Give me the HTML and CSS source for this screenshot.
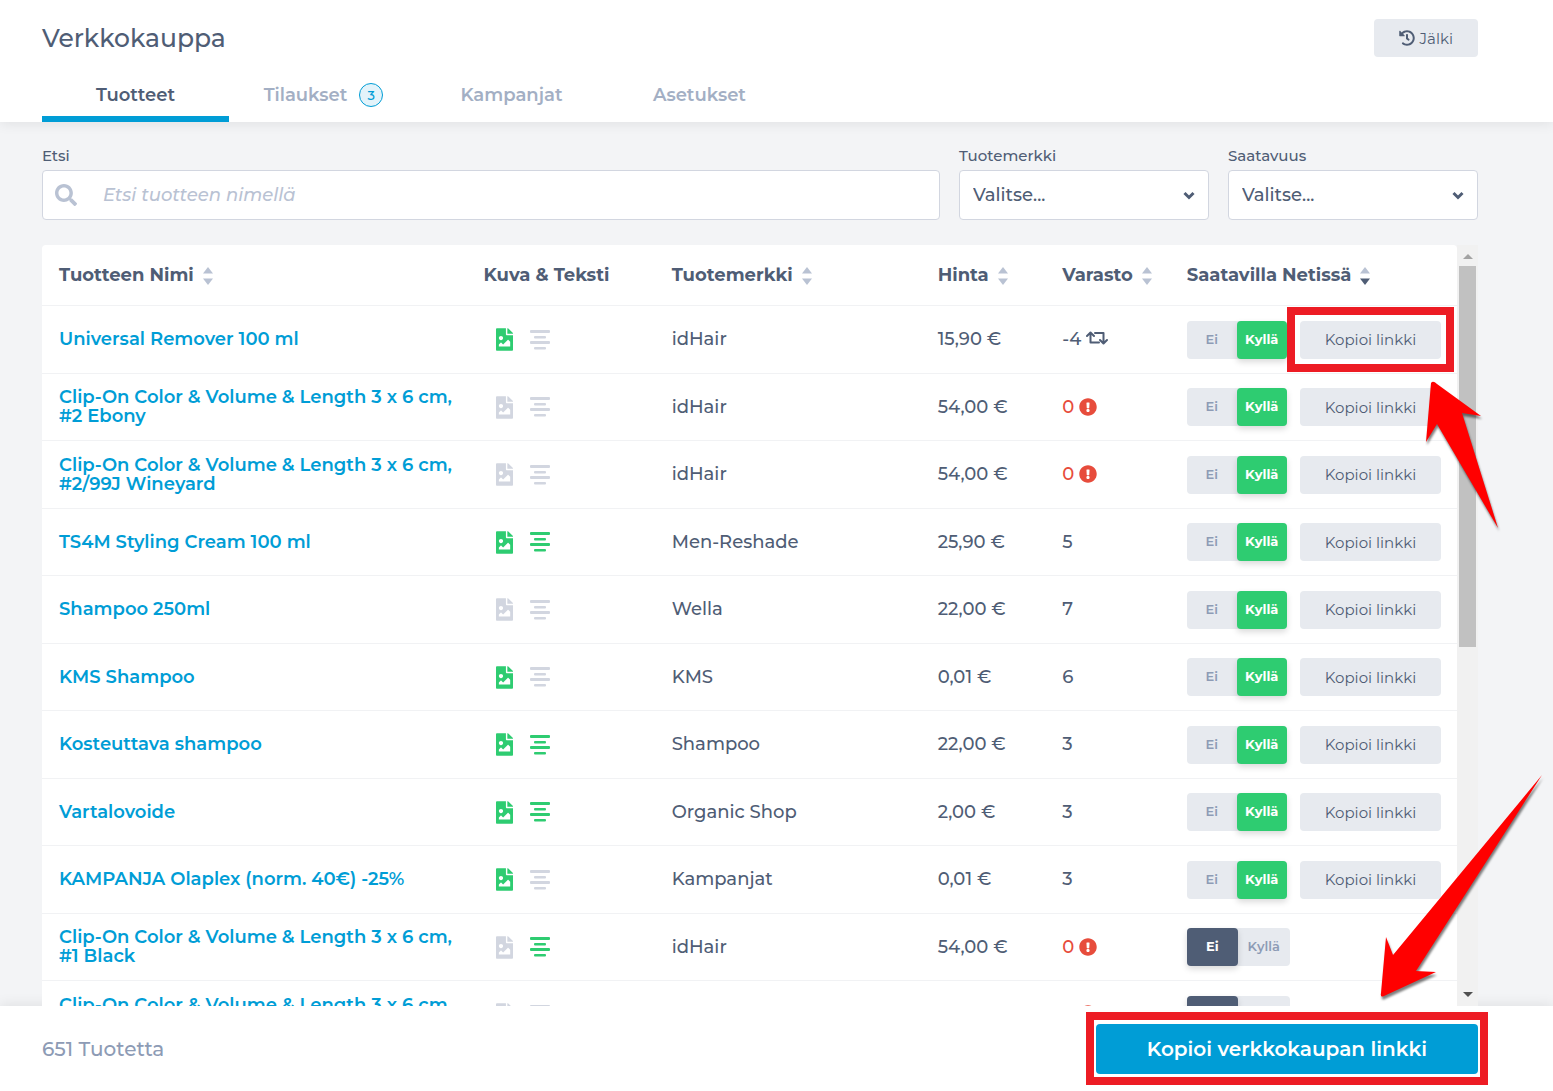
FILE: index.html
```html
<!DOCTYPE html>
<html lang="fi">
  <head>
    <meta charset="UTF-8" />
    <meta name="viewport" content="width=device-width, initial-scale=1.0" />
    <title>Verkkokauppa</title>
    <link rel="stylesheet" href="styles.css">
  </head>
  <body>
    <!-- Icon sprite -->
    <svg class="sprite" aria-hidden="true">
      <symbol id="i-history" viewBox="0 0 512 512">
        <path d="M504 255.531c.253 136.64-111.18 248.372-247.82 248.468-59.015.042-113.223-20.53-155.822-54.911-11.077-8.94-11.905-25.541-1.839-35.607l11.267-11.267c8.609-8.609 22.353-9.551 31.891-1.984C173.062 425.135 212.781 440 256 440c101.705 0 184-82.311 184-184 0-101.705-82.311-184-184-184-48.814 0-93.149 18.969-126.068 49.932l50.754 50.754c10.08 10.08 2.941 27.314-11.313 27.314H24c-8.837 0-16-7.163-16-16V38.627c0-14.254 17.234-21.393 27.314-11.314l49.372 49.372C129.209 34.136 189.552 8 256 8c136.81 0 247.747 110.78 248 247.531zm-180.912 78.784l9.823-12.63c8.138-10.463 6.253-25.542-4.21-33.679L288 256.349V152c0-13.255-10.745-24-24-24h-16c-13.255 0-24 10.745-24 24v135.651l65.409 50.874c10.463 8.137 25.541 6.253 33.679-4.21z" />
      </symbol>
      <symbol id="i-search" viewBox="0 0 512 512">
        <path d="M505 442.7L405.3 343c-4.5-4.5-10.6-7-17-7H372c27.6-35.3 44-79.7 44-128C416 93.1 322.9 0 208 0S0 93.1 0 208s93.1 208 208 208c48.3 0 92.7-16.4 128-44v16.3c0 6.4 2.5 12.5 7 17l99.7 99.7c9.4 9.4 24.6 9.4 33.9 0l28.3-28.3c9.4-9.4 9.4-24.6.1-34zM208 336c-70.7 0-128-57.2-128-128 0-70.7 57.2-128 128-128 70.7 0 128 57.2 128 128 0 70.7-57.2 128-128 128z" />
      </symbol>
      <symbol id="i-image" viewBox="0 0 384 512">
        <path d="M384 121.941V128H256V0h6.059a24 24 0 0 1 16.97 7.029l97.941 97.941a24.002 24.002 0 0 1 7.03 16.971zM248 160c-13.2 0-24-10.8-24-24V0H24C10.745 0 0 10.745 0 24v464c0 13.255 10.745 24 24 24h336c13.255 0 24-10.745 24-24V160H248zm-135.455 16c26.51 0 48 21.49 48 48s-21.49 48-48 48-48-21.49-48-48 21.491-48 48-48zm208 240h-256l.485-48.485L104.545 328c4.686-4.686 11.799-4.201 16.485.485L160.545 368 264.06 264.485c4.686-4.686 12.284-4.686 16.971 0L320.545 304v112z" />
      </symbol>
      <symbol id="i-text" viewBox="0 0 20 20">
        <rect x="0" y="0" width="20" height="3" rx="1" />
        <rect x="4" y="6" width="12" height="2.5" rx="1" />
        <rect x="0" y="11" width="20" height="3" rx="1" />
        <rect x="4" y="17" width="12" height="2.5" rx="1" />
      </symbol>
      <symbol id="i-alert" viewBox="0 0 512 512">
        <path d="M504 256c0 136.997-111.043 248-248 248S8 392.997 8 256C8 119.083 119.043 8 256 8s248 111.083 248 248zm-248 50c-25.405 0-46 20.595-46 46s20.595 46 46 46 46-20.595 46-46-20.595-46-46-46zm-43.673-165.346l7.418 136c.347 6.364 5.609 11.346 11.982 11.346h48.546c6.373 0 11.635-4.982 11.982-11.346l7.418-136c.375-6.874-5.098-12.654-11.982-12.654h-63.383c-6.884 0-12.356 5.78-11.981 12.654z" />
      </symbol>
      <symbol id="i-repeat" viewBox="0 0 22 14">
        <path d="M1 5l3.500-3.500L8 5M4.500 2v9.500H13M9 2h8.500v9.500M14 9l3.500 3.500L21 9" fill="none" stroke="currentColor" stroke-width="2" stroke-linecap="round" stroke-linejoin="round" />
      </symbol>
      <symbol id="i-sort" viewBox="0 0 10 18">
        <path class="sort-up" d="M5 0l5 6.500H0z" />
        <path d="M5 18l5-6.500H0z" />
      </symbol>
    </svg>

    <header class="header">
      <div class="title-row">
        <h1>Verkkokauppa</h1>
        <button type="button" class="btn"><svg class="icon-history"><use href="#i-history" /></svg>Jälki</button>
      </div>
      <nav class="tabs">
        <a href="#" class="active">Tuotteet</a>
        <a href="#">Tilaukset <span class="badge">3</span></a>
        <a href="#">Kampanjat</a>
        <a href="#">Asetukset</a>
      </nav>
    </header>

    <main class="content">
      <form class="filters">
        <div class="field field-search">
          <label for="search">Etsi</label>
          <div class="control">
            <svg class="icon-search"><use href="#i-search" /></svg>
            <input type="text" id="search" placeholder="Etsi tuotteen nimellä" />
          </div>
        </div>
        <div class="field">
          <label for="brand">Tuotemerkki</label>
          <div class="control">
            <select id="brand"><option>Valitse...</option></select>
            <svg class="chevron" viewBox="0 0 12 9"><path d="M1.500 2L6 6.500 10.500 2" /></svg>
          </div>
        </div>
        <div class="field">
          <label for="availability">Saatavuus</label>
          <div class="control">
            <select id="availability"><option>Valitse...</option></select>
            <svg class="chevron" viewBox="0 0 12 9"><path d="M1.500 2L6 6.500 10.500 2" /></svg>
          </div>
        </div>
      </form>

      <div class="panel">
        <div class="table-wrap">
          <table>
            <thead>
              <tr>
                <th class="col-name">Tuotteen Nimi<svg class="sort"><use href="#i-sort" /></svg></th>
                <th class="col-media">Kuva &amp; Teksti</th>
                <th class="col-brand">Tuotemerkki<svg class="sort"><use href="#i-sort" /></svg></th>
                <th class="col-price">Hinta<svg class="sort"><use href="#i-sort" /></svg></th>
                <th class="col-stock">Varasto<svg class="sort"><use href="#i-sort" /></svg></th>
                <th class="col-online">Saatavilla Netissä<svg class="sort sorted"><use href="#i-sort" /></svg></th>
              </tr>
            </thead>
            <tbody id="products"></tbody>
          </table>
        </div>
        <div class="scrollbar">
          <span class="arrow-up"></span>
          <div class="track"><div class="thumb"></div></div>
          <span class="arrow-down"></span>
        </div>
        <svg class="pointer pointer-row" viewBox="0 0 80 156">
          <path d="M12 7Q14 4 18 8L62 40 43 37 79 152 18 48 7 66z" />
        </svg>
        <svg class="pointer pointer-footer" viewBox="0 0 170 230">
          <path d="M164 3L38 199 58 200 6 224Q2 226 3 221L8 165 15 183z" />
        </svg>
      </div>
    </main>

    <footer class="footer">
      <span class="count">651 Tuotetta</span>
      <div class="marked marked-footer">
        <button type="button" class="btn-primary">Kopioi verkkokaupan linkki</button>
      </div>
    </footer>

    <script>
      const products = [
        { name: "Universal Remover 100 ml", image: true, text: false, brand: "idHair", price: "15,90 €", stock: -4, online: true },
        { name: "Clip-On Color & Volume & Length 3 x 6 cm, #2 Ebony", image: false, text: false, brand: "idHair", price: "54,00 €", stock: 0, online: true },
        { name: "Clip-On Color & Volume & Length 3 x 6 cm, #2/99J Wineyard", image: false, text: false, brand: "idHair", price: "54,00 €", stock: 0, online: true },
        { name: "TS4M Styling Cream 100 ml", image: true, text: true, brand: "Men-Reshade", price: "25,90 €", stock: 5, online: true },
        { name: "Shampoo 250ml", image: false, text: false, brand: "Wella", price: "22,00 €", stock: 7, online: true },
        { name: "KMS Shampoo", image: true, text: false, brand: "KMS", price: "0,01 €", stock: 6, online: true },
        { name: "Kosteuttava shampoo", image: true, text: true, brand: "Shampoo", price: "22,00 €", stock: 3, online: true },
        { name: "Vartalovoide", image: true, text: true, brand: "Organic Shop", price: "2,00 €", stock: 3, online: true },
        { name: "KAMPANJA Olaplex (norm. 40€) -25%", image: true, text: false, brand: "Kampanjat", price: "0,01 €", stock: 3, online: true },
        { name: "Clip-On Color & Volume & Length 3 x 6 cm, #1 Black", image: false, text: true, brand: "idHair", price: "54,00 €", stock: 0, online: false },
        { name: "Clip-On Color & Volume & Length 3 x 6 cm, #4 Brown", image: false, text: false, brand: "idHair", price: "54,00 €", stock: 0, online: false },
      ];

      const escapeHtml = (s) => s.replace(/&/g, "&amp;");

      const stockCell = (stock) => {
        if (stock < 0) return `${stock} <svg class="icon-repeat"><use href="#i-repeat" /></svg>`;
        if (stock === 0) return `<span class="out">0 <svg class="icon-alert"><use href="#i-alert" /></svg></span>`;
        return stock;
      };

      // The first row's copy button is highlighted
      const copyButton = (i) =>
        `<div class="${i === 0 ? "marked marked-row" : "copy"}"><button type="button" class="btn">Kopioi linkki</button></div>`;

      document.getElementById("products").innerHTML = products
        .map(
          (p, i) => `
          <tr>
            <td class="name"><a href="#">${escapeHtml(p.name)}</a></td>
            <td>
              <div class="media">
                <svg class="icon-image ${p.image ? "on" : ""}"><use href="#i-image" /></svg>
                <svg class="icon-text ${p.text ? "on" : ""}"><use href="#i-text" /></svg>
              </div>
            </td>
            <td>${p.brand}</td>
            <td>${p.price}</td>
            <td>${stockCell(p.stock)}</td>
            <td>
              <div class="actions">
                <div class="toggle">
                  <input type="radio" name="online-${i}" id="no-${i}" ${p.online ? "" : "checked"} />
                  <label class="no" for="no-${i}">Ei</label>
                  <input type="radio" name="online-${i}" id="yes-${i}" ${p.online ? "checked" : ""} />
                  <label class="yes" for="yes-${i}">Kyllä</label>
                </div>
                ${p.online ? copyButton(i) : ""}
              </div>
            </td>
          </tr>`
        )
        .join("");
    </script>
  </body>
</html>
```
FILE: styles.css
```css
* {
  margin: 0;
  padding: 0;
  box-sizing: border-box;
}

:root {
  --text: #4f5d75;
  --muted: #8d9bb5;
  --tab: #a3afc4;
  --placeholder: #b9c2d3;
  --icon: #d2d6e0;
  --light: #e7eaef;
  --blue: #009dd6;
  --green: #2ecc71;
  --red: #e74c3c;
  --mark: #ed1c24;
}

body {
  display: flex;
  flex-direction: column;
  height: 100vh;
  overflow: hidden;
  background: #f3f4f6;
  color: var(--text);
  font-family: "Montserrat", "Inter", sans-serif;
  font-size: 18px;
  font-weight: 500;
}

button,
input,
select {
  font: inherit;
  color: inherit;
}

a {
  text-decoration: none;
}

svg {
  fill: currentColor;
}

.sprite {
  position: absolute;
  width: 0;
  height: 0;
}

/* Header */
.header {
  padding: 19px 75px 0 42px;
  background: #fff;
  box-shadow: 0 2px 12px rgba(0, 0, 0, 0.08);
  z-index: 1;
}

.title-row {
  display: flex;
  justify-content: space-between;
  align-items: center;
}

h1 {
  font-size: 25px;
  font-weight: 500;
  line-height: 38px;
}

.btn {
  display: flex;
  align-items: center;
  justify-content: center;
  gap: 5px;
  height: 38px;
  padding: 0 25px;
  border: none;
  border-radius: 4px;
  background: var(--light);
  font-size: 15px;
  font-weight: 400;
  white-space: nowrap;
  cursor: pointer;
}

.icon-history {
  width: 16px;
  height: 16px;
}

.tabs {
  display: flex;
  gap: 1px;
  margin-top: 11px;
}

.tabs a {
  display: flex;
  align-items: center;
  justify-content: center;
  gap: 12px;
  width: 187px;
  height: 54px;
  color: var(--tab);
  font-weight: 600;
}

.tabs .active {
  box-shadow: inset 0 -6px var(--blue);
  color: var(--text);
}

.badge {
  width: 24px;
  height: 24px;
  border: 1px solid var(--blue);
  border-radius: 50%;
  background: #e3f3fa;
  color: var(--blue);
  font-size: 13px;
  font-weight: 500;
  line-height: 22px;
  text-align: center;
}

/* Filters */
.content {
  display: flex;
  flex: 1;
  flex-direction: column;
  min-height: 0;
  padding: 24px 75px 0 42px;
}

.filters {
  display: flex;
  gap: 19px;
}

.field {
  width: 250px;
}

.field-search {
  flex: 1;
}

.field label {
  display: block;
  font-size: 15px;
  line-height: 20px;
  margin-bottom: 4px;
}

.control {
  display: flex;
  align-items: center;
  height: 50px;
  padding: 0 13px;
  border: 1px solid var(--icon);
  border-radius: 4px;
  background: #fff;
}

.control input,
.control select {
  flex: 1;
  min-width: 0;
  height: 100%;
  border: none;
  outline: none;
  background: none;
  appearance: none;
}

.field-search .control {
  padding-left: 12px;
}

.control input {
  padding-left: 26px;
}

.control input::placeholder {
  color: var(--placeholder);
  font-style: italic;
}

.icon-search {
  width: 22px;
  height: 22px;
  color: var(--placeholder);
}

.chevron {
  width: 12px;
  height: 9px;
  fill: none;
  stroke: var(--text);
  stroke-width: 3;
}

/* Product table */
.panel {
  display: flex;
  flex: 1;
  min-height: 0;
  margin-top: 25px;
  position: relative;
}

.table-wrap {
  flex: 1;
  overflow: hidden;
  border-radius: 4px 4px 0 0;
  background: #fff;
}

table {
  width: 100%;
  table-layout: fixed;
  border-collapse: separate;
  border-spacing: 0;
}

th,
td {
  height: 68px;
  padding: 0 17px;
  border-bottom: 1px solid #f1f2f4;
  line-height: 19px;
  text-align: left;
  vertical-align: middle;
}

tr:nth-child(even) td {
  height: 67px;
}

th {
  height: 61px;
  font-weight: 700;
  white-space: nowrap;
}

.name {
  padding-right: 8px;
}

td a {
  color: var(--blue);
  font-weight: 600;
}

.col-name {
  width: 30%;
}

.col-media {
  width: 13.3%;
}

.col-brand {
  width: 18.8%;
}

.col-price,
.col-stock {
  width: 8.8%;
}

.sort {
  width: 10px;
  height: 18px;
  margin-left: 9px;
  vertical-align: -4px;
  color: var(--placeholder);
}

.sorted {
  color: var(--text);
}

.sort-up {
  fill: var(--placeholder);
}

.media {
  display: flex;
  align-items: center;
  gap: 17px;
  padding-left: 12px;
  color: var(--icon);
}

.media .on {
  color: var(--green);
}

.icon-image {
  width: 17px;
  height: 23px;
}

.icon-text {
  width: 20px;
  height: 20px;
}

.icon-repeat {
  width: 22px;
  height: 14px;
}

.icon-alert {
  width: 18px;
  height: 18px;
  vertical-align: -3px;
}

.out {
  color: var(--red);
}

.actions {
  display: flex;
  gap: 13px;
}

.toggle {
  display: flex;
  height: 38px;
  border-radius: 4px;
  background: var(--light);
  color: var(--muted);
  font-size: 13px;
  font-weight: 600;
  line-height: 36px;
  text-align: center;
}

.toggle input {
  position: absolute;
  opacity: 0;
}

.toggle label {
  width: 50px;
  border-radius: 4px;
  cursor: pointer;
}

.toggle input:checked + label {
  color: #fff;
  font-weight: 700;
  box-shadow: 0 3px 6px rgba(0, 0, 0, 0.15);
}

.toggle input:checked + .no {
  width: 51px;
  background: var(--text);
}

.toggle input:not(:checked) + .yes {
  width: 52px;
}

.toggle input:checked + .yes {
  background: var(--green);
}

/* Red highlight frames and arrows */
.marked {
  position: relative;
}

.marked::after {
  content: "";
  position: absolute;
  inset: -14px -13px -13px;
  border: 8px solid var(--mark);
  pointer-events: none;
}

.marked-footer::after {
  inset: -12px -10px -11px;
}

.pointer {
  position: absolute;
  fill: #f00;
  filter: drop-shadow(1px 3px 1px rgba(0, 0, 0, 0.5));
  pointer-events: none;
}

.pointer-row {
  top: 131px;
  right: -21px;
  width: 80px;
  height: 156px;
}

.pointer-footer {
  right: -70px;
  bottom: 4px;
  width: 170px;
  height: 230px;
}

/* Scrollbar */
.scrollbar {
  display: flex;
  flex-direction: column;
  align-items: center;
  width: 21px;
  padding: 9px 0;
  background: #f1f1f1;
}

.track {
  flex: 1;
  width: 17px;
  margin: 7px 0;
}

.thumb {
  height: 53%;
  background: #c1c1c1;
}

.arrow-up,
.arrow-down {
  border: 5px solid transparent;
}

.arrow-up {
  border-top: none;
  border-bottom-color: #a3a3a3;
}

.arrow-down {
  border-bottom: none;
  border-top-color: #505050;
}

/* Footer */
.footer {
  display: flex;
  align-items: center;
  justify-content: space-between;
  height: 85px;
  padding: 0 75px 0 42px;
  background: #fff;
  box-shadow: 0 -2px 12px rgba(0, 0, 0, 0.08);
}

.count {
  color: var(--muted);
  font-size: 20px;
}

.btn-primary {
  height: 50px;
  padding: 0 51px;
  border: none;
  border-radius: 4px;
  background: var(--blue);
  color: #fff;
  font-size: 20px;
  font-weight: 600;
  cursor: pointer;
}
```
